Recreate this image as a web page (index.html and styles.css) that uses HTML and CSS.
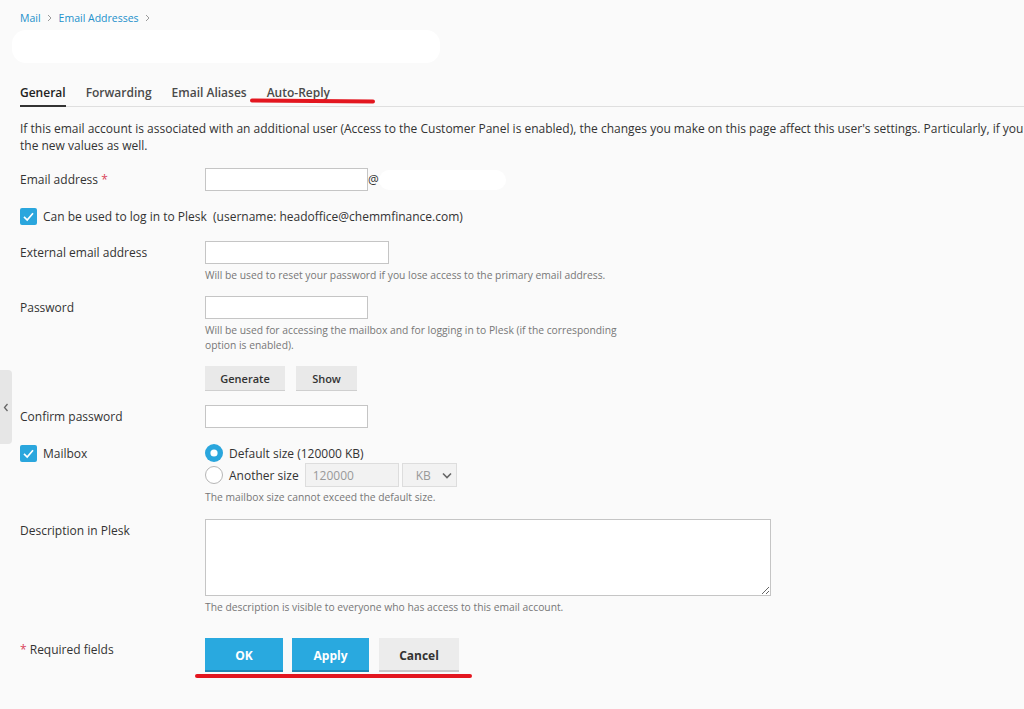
FILE: index.html
```html
<!DOCTYPE html>
<html lang="en">
<head>
<meta charset="utf-8">
<title>Email Address - General</title>
<link rel="stylesheet" href="styles.css">
</head>
<body>
<div class="side-handle"><svg width="6" height="9" viewBox="0 0 6 9"><path d="M4.5 1 L1.5 4.5 L4.5 8" fill="none" stroke="#666" stroke-width="1.3"/></svg></div>
<div class="page">
  <nav class="crumbs">
    <a href="#">Mail</a>
    <svg class="sep" width="5" height="8" viewBox="0 0 5 8"><path d="M1 1 L4 4 L1 7" fill="none" stroke="#9a9a9a" stroke-width="1"/></svg>
    <a href="#">Email Addresses</a>
    <svg class="sep" width="5" height="8" viewBox="0 0 5 8"><path d="M1 1 L4 4 L1 7" fill="none" stroke="#9a9a9a" stroke-width="1"/></svg>
  </nav>
  <div class="title-mask"></div>
  <div class="tabs">
    <span class="tab active">General</span>
    <span class="tab">Forwarding</span>
    <span class="tab">Email Aliases</span>
    <span class="tab">Auto-Reply</span>
  </div>
  <p class="intro">
    <span>If this email account is associated with an additional user (Access to the Customer Panel is enabled), the changes you make on this page affect this user's settings. Particularly, if you</span>
    <span>the new values as well.</span>
  </p>
  <div class="form">
    <div class="row r-email">
      <div class="lbl">Email address <span class="req">*</span></div>
      <div class="ctl inline">
        <input class="inp w163" type="text">
        <span class="at">@</span>
        <span class="mask"></span>
      </div>
    </div>

    <div class="row-check r-login">
      <svg class="cb" width="17" height="17" viewBox="0 0 17 17"><rect width="17" height="17" rx="2" fill="#2aa6dd"/><path d="M4 8.8 L7.2 12 L13 5.2" fill="none" stroke="#fff" stroke-width="1.7"/></svg>
      <span>Can be used to log in to Plesk&nbsp; (username: headoffice@chemmfinance.com)</span>
    </div>

    <div class="row r-ext">
      <div class="lbl">External email address</div>
      <div class="ctl">
        <input class="inp w184" type="text">
        <div class="hint">Will be used to reset your password if you lose access to the primary email address.</div>
      </div>
    </div>

    <div class="row r-pwd">
      <div class="lbl">Password</div>
      <div class="ctl">
        <input class="inp w163" type="password">
        <div class="hint hint-wrap">Will be used for accessing the mailbox and for logging in to Plesk (if the corresponding option is enabled).</div>
        <div class="btns-small">
          <button class="btn-s w80" type="button">Generate</button>
          <button class="btn-s w61" type="button">Show</button>
        </div>
      </div>
    </div>

    <div class="row r-confirm">
      <div class="lbl">Confirm password</div>
      <div class="ctl">
        <input class="inp w163" type="password">
      </div>
    </div>

    <div class="row r-mailbox">
      <div class="lbl-check">
        <svg class="cb" width="17" height="17" viewBox="0 0 17 17"><rect width="17" height="17" rx="2" fill="#2aa6dd"/><path d="M4 8.8 L7.2 12 L13 5.2" fill="none" stroke="#fff" stroke-width="1.7"/></svg>
        <span>Mailbox</span>
      </div>
      <div class="ctl">
        <div class="radio-row r1">
          <svg width="18" height="18" viewBox="0 0 18 18"><circle cx="9" cy="9" r="9" fill="#2aa6dd"/><circle cx="9" cy="9" r="3.6" fill="#fff"/></svg>
          <span>Default size (120000 KB)</span>
        </div>
        <div class="radio-row r2">
          <svg width="18" height="18" viewBox="0 0 18 18"><circle cx="9" cy="9" r="8.5" fill="#fff" stroke="#b5b5b5" stroke-width="1"/></svg>
          <span>Another size</span>
          <input class="inp-dis" type="text" value="120000" disabled>
          <div class="sel">
            <span>KB</span>
            <svg width="10" height="7" viewBox="0 0 10 7"><path d="M1 1.5 L5 5.5 L9 1.5" fill="none" stroke="#666" stroke-width="1.6"/></svg>
          </div>
        </div>
        <div class="hint hint-mb">The mailbox size cannot exceed the default size.</div>
      </div>
    </div>

    <div class="row r-desc">
      <div class="lbl">Description in Plesk</div>
      <div class="ctl">
        <textarea class="ta"></textarea>
        <div class="hint">The description is visible to everyone who has access to this email account.</div>
      </div>
    </div>

    <div class="row r-actions">
      <div class="lbl"><span class="req">*</span> Required fields</div>
      <div class="ctl actions">
        <button class="btn btn-primary w78" type="button">OK</button>
        <button class="btn btn-primary w77" type="button">Apply</button>
        <button class="btn btn-default w80" type="button">Cancel</button>
      </div>
    </div>
  </div>
</div>
<div class="mark mark-tab"></div>
<div class="mark mark-btn"></div>
</body>
</html>
```

FILE: styles.css
```css
html, body {
  margin: 0;
  height: 100%;
  overflow: hidden;
}
body {
  position: relative;
  background: #fafafa;
  font-family: "Open Sans", "Noto Sans", sans-serif;
  font-size: 12px;
  color: #333;
}
.page {
  padding: 11px 0 0 20px;
}

/* breadcrumbs */
.crumbs {
  display: flex;
  align-items: center;
  height: 14px;
  font-size: 10.5px;
  line-height: 14px;
}
.crumbs a {
  color: #2290cb;
  text-decoration: none;
}
.crumbs .sep {
  margin: 0 7px 0 6px;
}
.title-mask {
  margin: 5px 0 0 -8px;
  width: 428px;
  height: 33px;
  background: #fff;
  border-radius: 14px;
}

/* tabs */
.tabs {
  display: flex;
  gap: 20px;
  margin-top: 22px;
  border-bottom: 1px solid #dfdfdf;
}
.tab {
  position: relative;
  font-weight: 600;
  line-height: 16px;
  padding-bottom: 5px;
  color: #4a4a4a;
}
.tab.active {
  color: #222;
}
.tab.active::after {
  content: "";
  position: absolute;
  left: 0;
  right: 0;
  bottom: -1px;
  height: 2px;
  background: #333;
}

.intro {
  margin: 13px 0 0;
  line-height: 17px;
  white-space: nowrap;
}
.intro span {
  display: block;
}

/* form */
.form {
  display: flex;
  flex-direction: column;
  margin-top: 14px;
}
.row {
  display: grid;
  grid-template-columns: 185px auto;
  align-items: start;
}
.lbl {
  padding-top: 3px;
  line-height: 17px;
}
.req {
  color: #d9455a;
}
.ctl.inline {
  display: flex;
  align-items: center;
}
.inp {
  box-sizing: border-box;
  display: block;
  height: 23px;
  border: 1px solid #c5c5c5;
  background: #fff;
  padding: 0 6px;
  font: inherit;
}
.w163 { width: 163px; }
.w184 { width: 184px; }
.at {
  margin-left: 0;
  line-height: 17px;
}
.mask {
  width: 127px;
  height: 20px;
  background: #fff;
  border-radius: 10px;
}

.row-check {
  display: flex;
  align-items: center;
  gap: 6px;
  height: 17px;
  margin-top: 17px;
}
.cb {
  flex: none;
  display: block;
}

.hint {
  margin-top: 4px;
  font-size: 10.3px;
  line-height: 14px;
  color: #777;
}
.hint-wrap {
  width: 430px;
  line-height: 15px;
}
.r-ext { margin-top: 16px; }
.r-pwd { margin-top: 14px; }
.r-confirm { margin-top: 14px; }
.r-mailbox { margin-top: 16px; }
.r-desc { margin-top: 15px; }
.r-actions { margin-top: 24px; }

.btns-small {
  display: flex;
  gap: 11px;
  margin-top: 13px;
}
.btn-s {
  height: 25px;
  border: 0;
  background: #e9e9e9;
  box-shadow: inset 0 -1px 0 #cfcfcf;
  font-family: inherit;
  font-size: 11px;
  font-weight: 600;
  color: #333;
  padding: 0;
}
.w80 { width: 80px; }
.w61 { width: 61px; }
.w78 { width: 78px; }
.w77 { width: 77px; }

/* mailbox */
.lbl-check {
  display: flex;
  align-items: center;
  gap: 6px;
  height: 18px;
}
.radio-row {
  display: flex;
  align-items: center;
  gap: 6px;
}
.radio-row svg {
  display: block;
  flex: none;
}
.radio-row.r1 {
  height: 18px;
}
.radio-row.r2 {
  height: 24px;
  margin-top: 1px;
}
.inp-dis {
  box-sizing: border-box;
  width: 94px;
  height: 24px;
  border: 1px solid #ddd;
  background: #f2f2f2;
  color: #999;
  padding: 0 7px;
  font: inherit;
}
.sel {
  box-sizing: border-box;
  width: 55px;
  height: 24px;
  margin-left: -3px;
  border: 1px solid #ddd;
  background: #f2f2f2;
  color: #999;
  display: flex;
  align-items: center;
  justify-content: space-between;
  padding: 0 4px 0 13px;
}
.hint-mb {
  margin-top: 3px;
}

.ta {
  box-sizing: border-box;
  display: block;
  width: 566px;
  height: 77px;
  border: 1px solid #c5c5c5;
  background: #fff;
  resize: both;
  margin: 0;
  font: inherit;
}

.actions {
  display: flex;
  gap: 9px;
}
.btn {
  height: 34px;
  border: 0;
  padding: 0;
  font-family: inherit;
  font-size: 12px;
  font-weight: 700;
}
.btn-primary {
  background: #29a9df;
  color: #fff;
  box-shadow: inset 0 -2px 0 #1f86b3;
}
.btn-default {
  margin-left: 1px;
  background: #ececec;
  color: #333;
  box-shadow: inset 0 -2px 0 #c8c8c8;
}

/* overlays */
.side-handle {
  position: absolute;
  left: 0;
  top: 370px;
  width: 12px;
  height: 74px;
  background: #e6e6e6;
  border-radius: 0 4px 4px 0;
  display: flex;
  align-items: center;
  justify-content: center;
}
.mark {
  position: absolute;
  background: #e3161f;
  border-radius: 2px;
}
.mark-tab {
  left: 250px;
  top: 99px;
  width: 125px;
  height: 4px;
  transform: rotate(0.4deg);
}
.mark-btn {
  left: 195px;
  top: 674px;
  width: 277px;
  height: 4px;
}
```
